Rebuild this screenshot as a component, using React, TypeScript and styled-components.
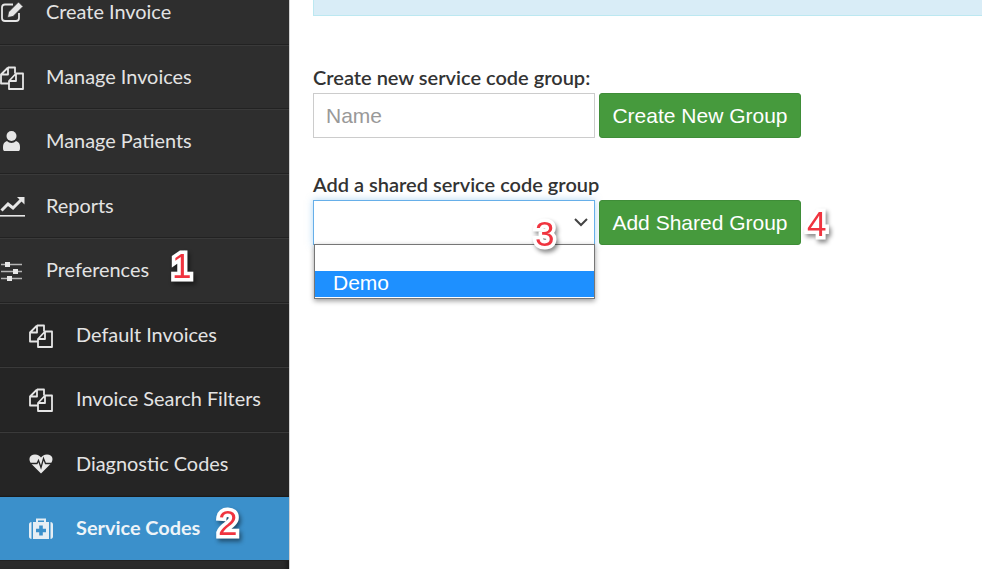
import React from "react";
import styled, { createGlobalStyle } from "styled-components";

const Global = createGlobalStyle`
  html, body { margin: 0; padding: 0; width: 982px; height: 569px; overflow: hidden; background: #fff; }
  * { box-sizing: border-box; }
`;
const Page = styled.div`display: flex; width: 982px; height: 569px; overflow: hidden; position: relative;`;
const Sidebar = styled.nav`
  width: 290px; height: 589px; flex: none; background: #2b2b2b; border-right: 1px solid #d4d4d4;
  box-shadow: inset -5px 0 5px -3px rgba(0,0,0,.45); overflow: hidden; margin-top: -20px;
`;
const Row = styled.div<{ $sub?: boolean; $active?: boolean }>`
  height: 64.5px; display: flex; align-items: center;
  padding: 0 0 2px ${p => (p.$sub ? "29px" : "0")};
  background: ${p => (p.$active ? "#3b90cb" : p.$sub ? "#252525" : "#2e2e2e")};
  border-top: 1px solid ${p => (p.$active ? "#1b1b1b" : "#3a3a3a")};
  border-bottom: 1px solid #222;
  color: ${p => (p.$active ? "#eef4f8" : "#e3e3e3")};
  font: ${p => (p.$active ? 700 : 400)} 19.9px "Lato", sans-serif;
`;
const IconSlot = styled.span<{ $sub?: boolean }>`
  width: ${p => (p.$sub ? "47px" : "46px")}; height: 24px; margin-top: 2px; flex: none; display: block; color: #e6e6e6;
  svg { display: block; overflow: visible; }
`;
const Main = styled.main`flex: 1; padding: 0 0 0 23px; min-width: 0;`;
const Alert = styled.div`height: 16px; background: #d9edf7; border: 1px solid #bce8f1; border-top: 0; border-right: 0;`;
const Label = styled.label`display: block; font: 600 20px "Lato", sans-serif; color: #333; line-height: 24px;`;
const Group = styled.section<{ $top: number }>`margin-top: ${p => p.$top}px; position: relative;`;
const Controls = styled.div`display: flex; gap: 4px; align-items: flex-start; margin-top: 4px;`;
const Field = styled.div`
  width: 282px; height: 45px; border: 1px solid #ccc; padding: 0 12px;
  font: 21px "Liberation Sans", sans-serif; color: #999; display: flex; align-items: center;
`;
const SelectBox = styled(Field)`
  border-color: #66afe9; box-shadow: 0 0 7px rgba(102,175,233,.5); justify-content: flex-end; padding-right: 6px; color: #444;
`;
const Btn = styled.button`
  width: 202px; height: 45px; border: 1px solid #3f8d38; border-radius: 3px; background: #469a3d; color: #fff;
  font: 21px "Liberation Sans", sans-serif; padding: 0;
`;
const Listbox = styled.div`
  position: absolute; left: 1px; top: 72px; width: 281px; height: 55px; background: #fff; border: 1px solid #767676;
  box-shadow: 0 2px 5px rgba(0,0,0,.4); font: 21px "Liberation Sans", sans-serif; color: #fff;
`;
const Blank = styled.div`height: 26px;`;
const Option = styled.div`height: 26px; background: #1e90ff; padding-left: 18px; line-height: 24px;`;
const Mark = styled.span<{ $x: number; $y: number }>`
  position: absolute; left: ${p => p.$x}px; top: ${p => p.$y}px; color: #f0343f; font: 400 35px "Liberation Sans", sans-serif;
  line-height: 1; -webkit-text-stroke: 7px #fff; paint-order: stroke fill; stroke-linejoin: round;
  filter: drop-shadow(2px 3px 2px rgba(0,0,0,.45)); z-index: 5;
`;
const Svg = ({ children }: { children: React.ReactNode }) => (
  <svg width="24" height="24" viewBox="0 0 24 24" fill="none">{children}</svg>
);
const Chevron = () => (
  <svg width="14" height="9" viewBox="0 0 14 9" fill="none" stroke="#444" strokeWidth="2"><path d="M1 1l6 6 6-6" /></svg>
);
const EditIcon = () => (
  <Svg>
    <path d="M13 4.500H5C3 4.500 2 5.500 2 7.500v10.500c0 2 1 3 3 3h11c2 0 3-1 3-3v-5" stroke="#e6e6e6" strokeWidth="1.800" />
    <path d="M7.500 17.500l1-5.500L18.500 2l4.500 4.500L13 16.500z" fill="#e6e6e6" stroke="#2e2e2e" strokeWidth="0.800" />
  </Svg>
);
const FilesIcon = () => (
  <Svg>
    <g stroke="#e6e6e6" strokeWidth="1.800" strokeLinejoin="round">
      <path d="M8 2.500h7v6M8 2.500L1 9.500v9h8M8 2.500v7H1" />
      <path d="M16 8.500h7v15.500H9v-8l7-7.500zM16 8.500v7.500H9" />
    </g>
  </Svg>
);
const UserIcon = () => (
  <Svg>
    <g fill="#e6e6e6">
      <circle cx="11.500" cy="7" r="5" />
      <path d="M4 22c-1-1-1-2-1-4 0-3 1-5 4-6 1 1 3 2 4.500 2s3.500-1 4.500-2c3 1 4 3 4 6 0 2 0 3-1 4z" />
    </g>
  </Svg>
);
const ChartIcon = () => (
  <Svg>
    <path d="M1.500 16.500L8 10l5 4 8-8" stroke="#e6e6e6" strokeWidth="3" />
    <path d="M17 3h7.500v7.500z" fill="#e6e6e6" />
    <rect x="0" y="21" width="25" height="1.600" fill="#e6e6e6" />
  </Svg>
);
const SlidersIcon = () => (
  <Svg>
    <g stroke="#b5b5b5" strokeWidth="1.300">
      <path d="M1 6.500h21M1 13.500h21M1 20.500h21" />
    </g>
    <g fill="#e6e6e6">
      <rect x="5" y="4" width="5" height="5" />
      <rect x="13" y="11" width="5" height="5" />
      <rect x="7" y="18" width="5" height="5" />
    </g>
  </Svg>
);
const HeartIcon = () => (
  <Svg>
    <path d="M12 21.500L2.500 12C-1 8 0 2.500 6 2.500c3 0 5 1.500 6 3 1-1.500 3-3 6-3 6 0 7 5.500 3.500 9.500z" fill="#e8e8e8" />
    <path d="M0.500 11.500h7.500l1.500-3 2.500 7 2.500-9 2 5h7" stroke="#252525" strokeWidth="1.300" />
  </Svg>
);
const MedkitIcon = () => (
  <Svg>
    <path d="M8 6.500V3.500h8v3" stroke="#e6eef4" strokeWidth="2" />
    <rect x="4" y="6" width="16" height="17" fill="#e6eef4" />
    <path d="M2.500 6v17C1 23 0 22 0 20.500v-12C0 7 1 6 2.500 6zM21.500 6v17c1.500 0 2.500-1 2.500-2.500v-12C24 7 23 6 21.500 6z" fill="#e6eef4" />
    <path d="M10.200 9.500h3.600v3.200H17v3.600h-3.200v3.200h-3.600v-3.200H7v-3.600h3.200z" fill="#3b90cb" />
  </Svg>
);
const items = [
  { t: "Create Invoice", I: EditIcon },
  { t: "Manage Invoices", I: FilesIcon },
  { t: "Manage Patients", I: UserIcon },
  { t: "Reports", I: ChartIcon },
  { t: "Preferences", I: SlidersIcon },
  { t: "Default Invoices", I: FilesIcon, sub: true },
  { t: "Invoice Search Filters", I: FilesIcon, sub: true },
  { t: "Diagnostic Codes", I: HeartIcon, sub: true },
  { t: "Service Codes", I: MedkitIcon, sub: true, active: true },
];
export default function App() {
  return (
    <Page>
      <Global />
      <Sidebar>
        {items.map(({ t, I, sub, active }) => (
          <Row key={t} $sub={sub} $active={active}>
            <IconSlot $sub={sub}><I /></IconSlot>{t}
          </Row>
        ))}
      </Sidebar>
      <Main>
        <Alert />
        <Group $top={49}>
          <Label>Create new service code group:</Label>
          <Controls>
            <Field>Name</Field>
            <Btn>Create New Group</Btn>
          </Controls>
        </Group>
        <Group $top={34}>
          <Label>Add a shared service code group</Label>
          <Controls>
            <SelectBox><Chevron /></SelectBox>
            <Btn>Add Shared Group</Btn>
          </Controls>
          <Listbox><Blank /><Option>Demo</Option></Listbox>
        </Group>
      </Main>
      <Mark $x={172} $y={248}>1</Mark>
      <Mark $x={218} $y={505}>2</Mark>
      <Mark $x={535} $y={216}>3</Mark>
      <Mark $x={807} $y={206}>4</Mark>
    </Page>
  );
}
